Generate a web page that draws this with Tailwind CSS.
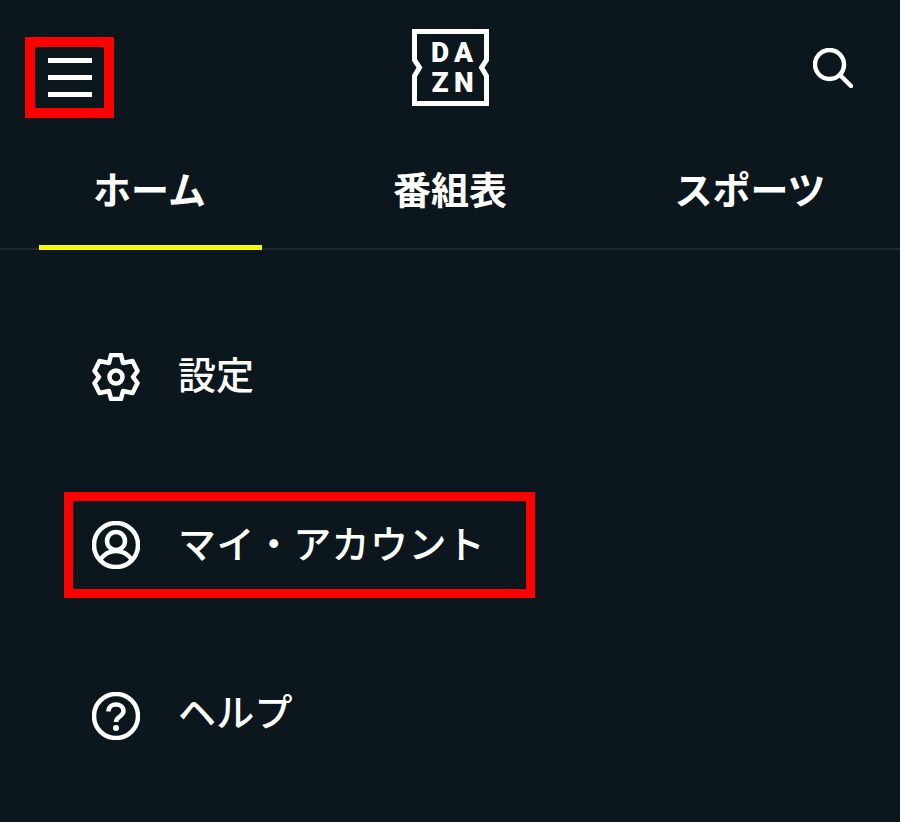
<!DOCTYPE html>
<html lang="ja">
  <head>
    <meta charset="UTF-8" />
    <meta name="viewport" content="width=device-width, initial-scale=1.0" />
    <title>DAZN メニュー</title>
    <script src="https://cdn.jsdelivr.net/npm/@tailwindcss/browser@4"></script>
  </head>
  <body class="bg-[#0c161d] text-white font-['Noto_Sans_CJK_JP','Noto_Sans',sans-serif]">
    <div class="w-[900px] h-[822px] overflow-hidden">
      <!-- Top bar -->
      <header class="h-[135px] pl-[25px] pr-[47px] grid grid-cols-[387px_77px_1fr] items-start">
        <button class="mt-[37px] w-[89px] h-[81px] border-[10px] border-[#ff0000] flex flex-col items-center justify-center gap-[12px]">
          <span class="block w-[44px] h-[5px] bg-white"></span>
          <span class="block w-[44px] h-[5px] bg-white"></span>
          <span class="block w-[44px] h-[5px] bg-white"></span>
        </button>
        <a href="#" class="block mt-[29px] w-[77px] h-[77px]">
          <svg viewBox="0 0 77 77" class="w-[77px] h-[77px]" fill="none">
            <path d="M2.5 2.5H74.5V31L69.5 38.5L74.5 47V74.5H2.5V47L7.5 38.5L2.5 31Z" stroke="#fff" stroke-width="5" />
            <text x="19" y="33" fill="#fff" font-family="Roboto, sans-serif" font-weight="900" font-size="28">D</text>
            <text x="42" y="33" fill="#fff" font-family="Roboto, sans-serif" font-weight="900" font-size="28">A</text>
            <text x="19.5" y="63" fill="#fff" font-family="Roboto, sans-serif" font-weight="900" font-size="28">Z</text>
            <text x="42" y="63" fill="#fff" font-family="Roboto, sans-serif" font-weight="900" font-size="28">N</text>
          </svg>
        </a>
        <button class="mt-[48px] justify-self-end">
          <svg viewBox="0 0 40 40" class="w-[40px] h-[40px] block" fill="none" stroke="#fff" stroke-width="4.5">
            <circle cx="16.5" cy="16.5" r="14.5" />
            <path d="M27 27L38 38" stroke-linecap="round" />
          </svg>
        </button>
      </header>

      <!-- Tabs -->
      <nav class="h-[115px] grid grid-cols-3 border-b-2 border-[#23292f] text-[38px] font-bold leading-none">
        <a href="#" class="relative flex justify-center pt-[34px] pr-[1px]">
          ホーム
          <span class="absolute left-[39px] bottom-[-2px] w-[223px] h-[5px] bg-[#f8f810]"></span>
        </a>
        <a href="#" class="flex justify-center pt-[34px]">番組表</a>
        <a href="#" class="flex justify-center pt-[34px]">スポーツ</a>
      </nav>

      <!-- Menu -->
      <ul class="pt-[102px] pl-[64px] text-[38px] font-medium leading-none">
        <li class="h-[50px] pl-[28px] flex items-center gap-[38px]">
          <svg viewBox="0 0 48 48" class="w-[48px] h-[48px]" fill="none" stroke="#fff" stroke-width="4.5" stroke-linejoin="round">
            <path d="M19 2H29L31 10L40.5 8L45.5 18L41 24L45.5 30L40.5 40L31 38L29 46H19L17 38L7.5 40L2.5 30L7 24L2.5 18L7.5 8L17 10Z" />
            <circle cx="24" cy="24" r="6.5" />
          </svg>
          <span class="-mt-[8px]">設定</span>
        </li>
        <li class="mt-[90px] w-[471px] h-[106px] pl-[19px] border-[9px] border-[#ff0000] flex items-center gap-[38px]">
          <svg viewBox="0 0 48 48" class="w-[48px] h-[48px]" fill="none" stroke="#fff" stroke-width="4.5">
            <circle cx="24" cy="24" r="22" />
            <circle cx="24" cy="20" r="9" />
            <path d="M8 39C12 33 18 30 24 30C30 30 36 33 40 39" />
          </svg>
          <span class="-mt-[6px] tracking-[0.4px]">マイ・アカウント</span>
        </li>
        <li class="mt-[94px] h-[48px] pl-[28px] flex items-center gap-[38px]">
          <svg viewBox="0 0 48 48" class="w-[48px] h-[48px]" fill="none" stroke="#fff" stroke-width="4.5">
            <circle cx="24" cy="24" r="22" />
            <path d="M16.5 19.5C16.5 15 20 12.5 24 12.5C28 12.5 31.5 15 31.5 19C31.5 24.5 24 24.5 24 30" />
            <circle cx="24" cy="36" r="3" fill="#fff" stroke="none" />
          </svg>
          <span class="-mt-[13px] tracking-[0.3px]">ヘルプ</span>
        </li>
      </ul>
    </div>
  </body>
</html>
